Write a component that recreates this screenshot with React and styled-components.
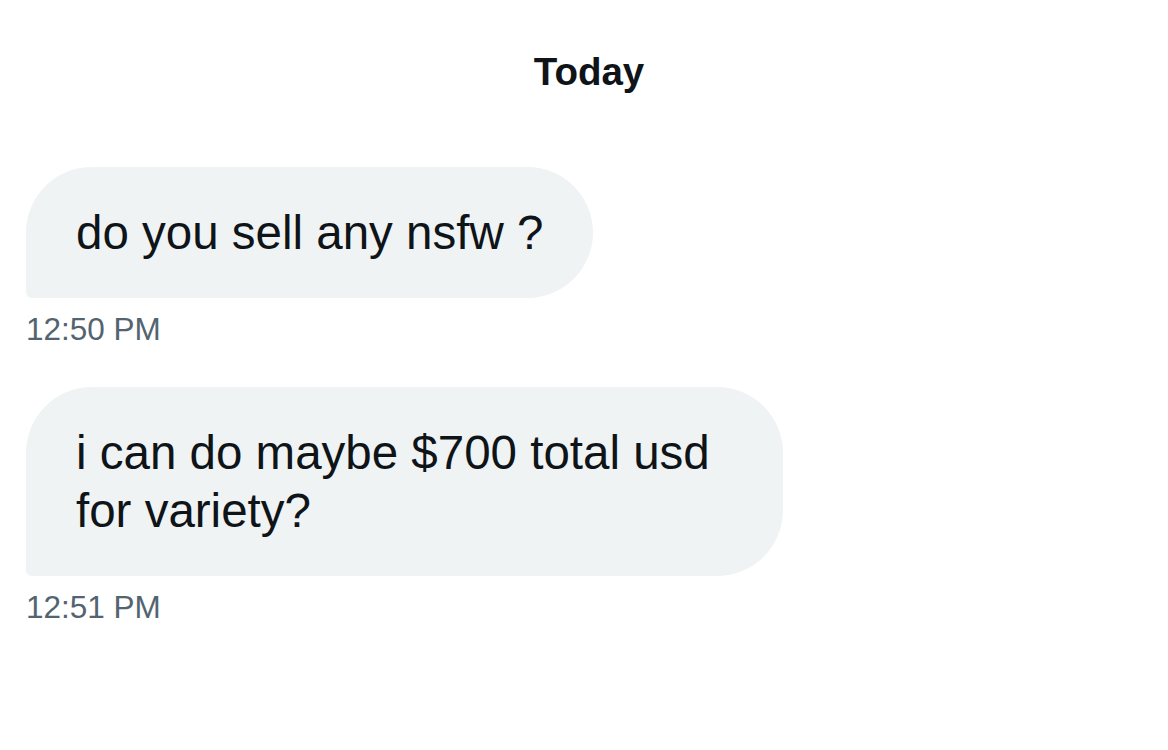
import React from "react";
import styled, { createGlobalStyle } from "styled-components";

const Global = createGlobalStyle`
  html, body { margin: 0; padding: 0; background: #ffffff; }
  body { font-family: "Liberation Sans", Arial, sans-serif; color: #0f1419; }
`;

const Page = styled.div`
  width: 1168px;
  height: 750px;
  box-sizing: border-box;
  padding: 49px 26px 0 26px;
  display: flex;
  flex-direction: column;
  align-items: flex-start;
  background: #ffffff;
  overflow: hidden;
`;

const DayLabel = styled.div`
  align-self: stretch;
  text-align: center;
  padding-left: 10px;
  font-size: 38.5px;
  line-height: 46px;
  font-weight: 700;
  color: #0f1419;
  margin-bottom: 72px;
`;

const Message = styled.div`
  display: flex;
  flex-direction: column;
  align-items: flex-start;
  margin-bottom: ${(p) => p.$gap}px;
`;

const Bubble = styled.div`
  box-sizing: border-box;
  max-width: 757px;
  padding: 36.5px 50px 36.5px 50px;
  background: #eff3f4;
  border-radius: 66px 66px 66px 6px;
  font-size: 47.5px;
  line-height: 58px;
  color: #0f1419;
`;

const Time = styled.div`
  margin-top: 13px;
  font-size: 31.5px;
  line-height: 36px;
  color: #536471;
`;

const messages = [
  { text: "do you sell any nsfw ?", time: "12:50 PM", gap: 40 },
  { text: "i can do maybe $700 total usd for variety?", time: "12:51 PM", gap: 0 },
];

export default function App() {
  return (
    <>
      <Global />
      <Page>
        <DayLabel>Today</DayLabel>
        {messages.map((m) => (
          <Message key={m.time} $gap={m.gap}>
            <Bubble>{m.text}</Bubble>
            <Time>{m.time}</Time>
          </Message>
        ))}
      </Page>
    </>
  );
}
